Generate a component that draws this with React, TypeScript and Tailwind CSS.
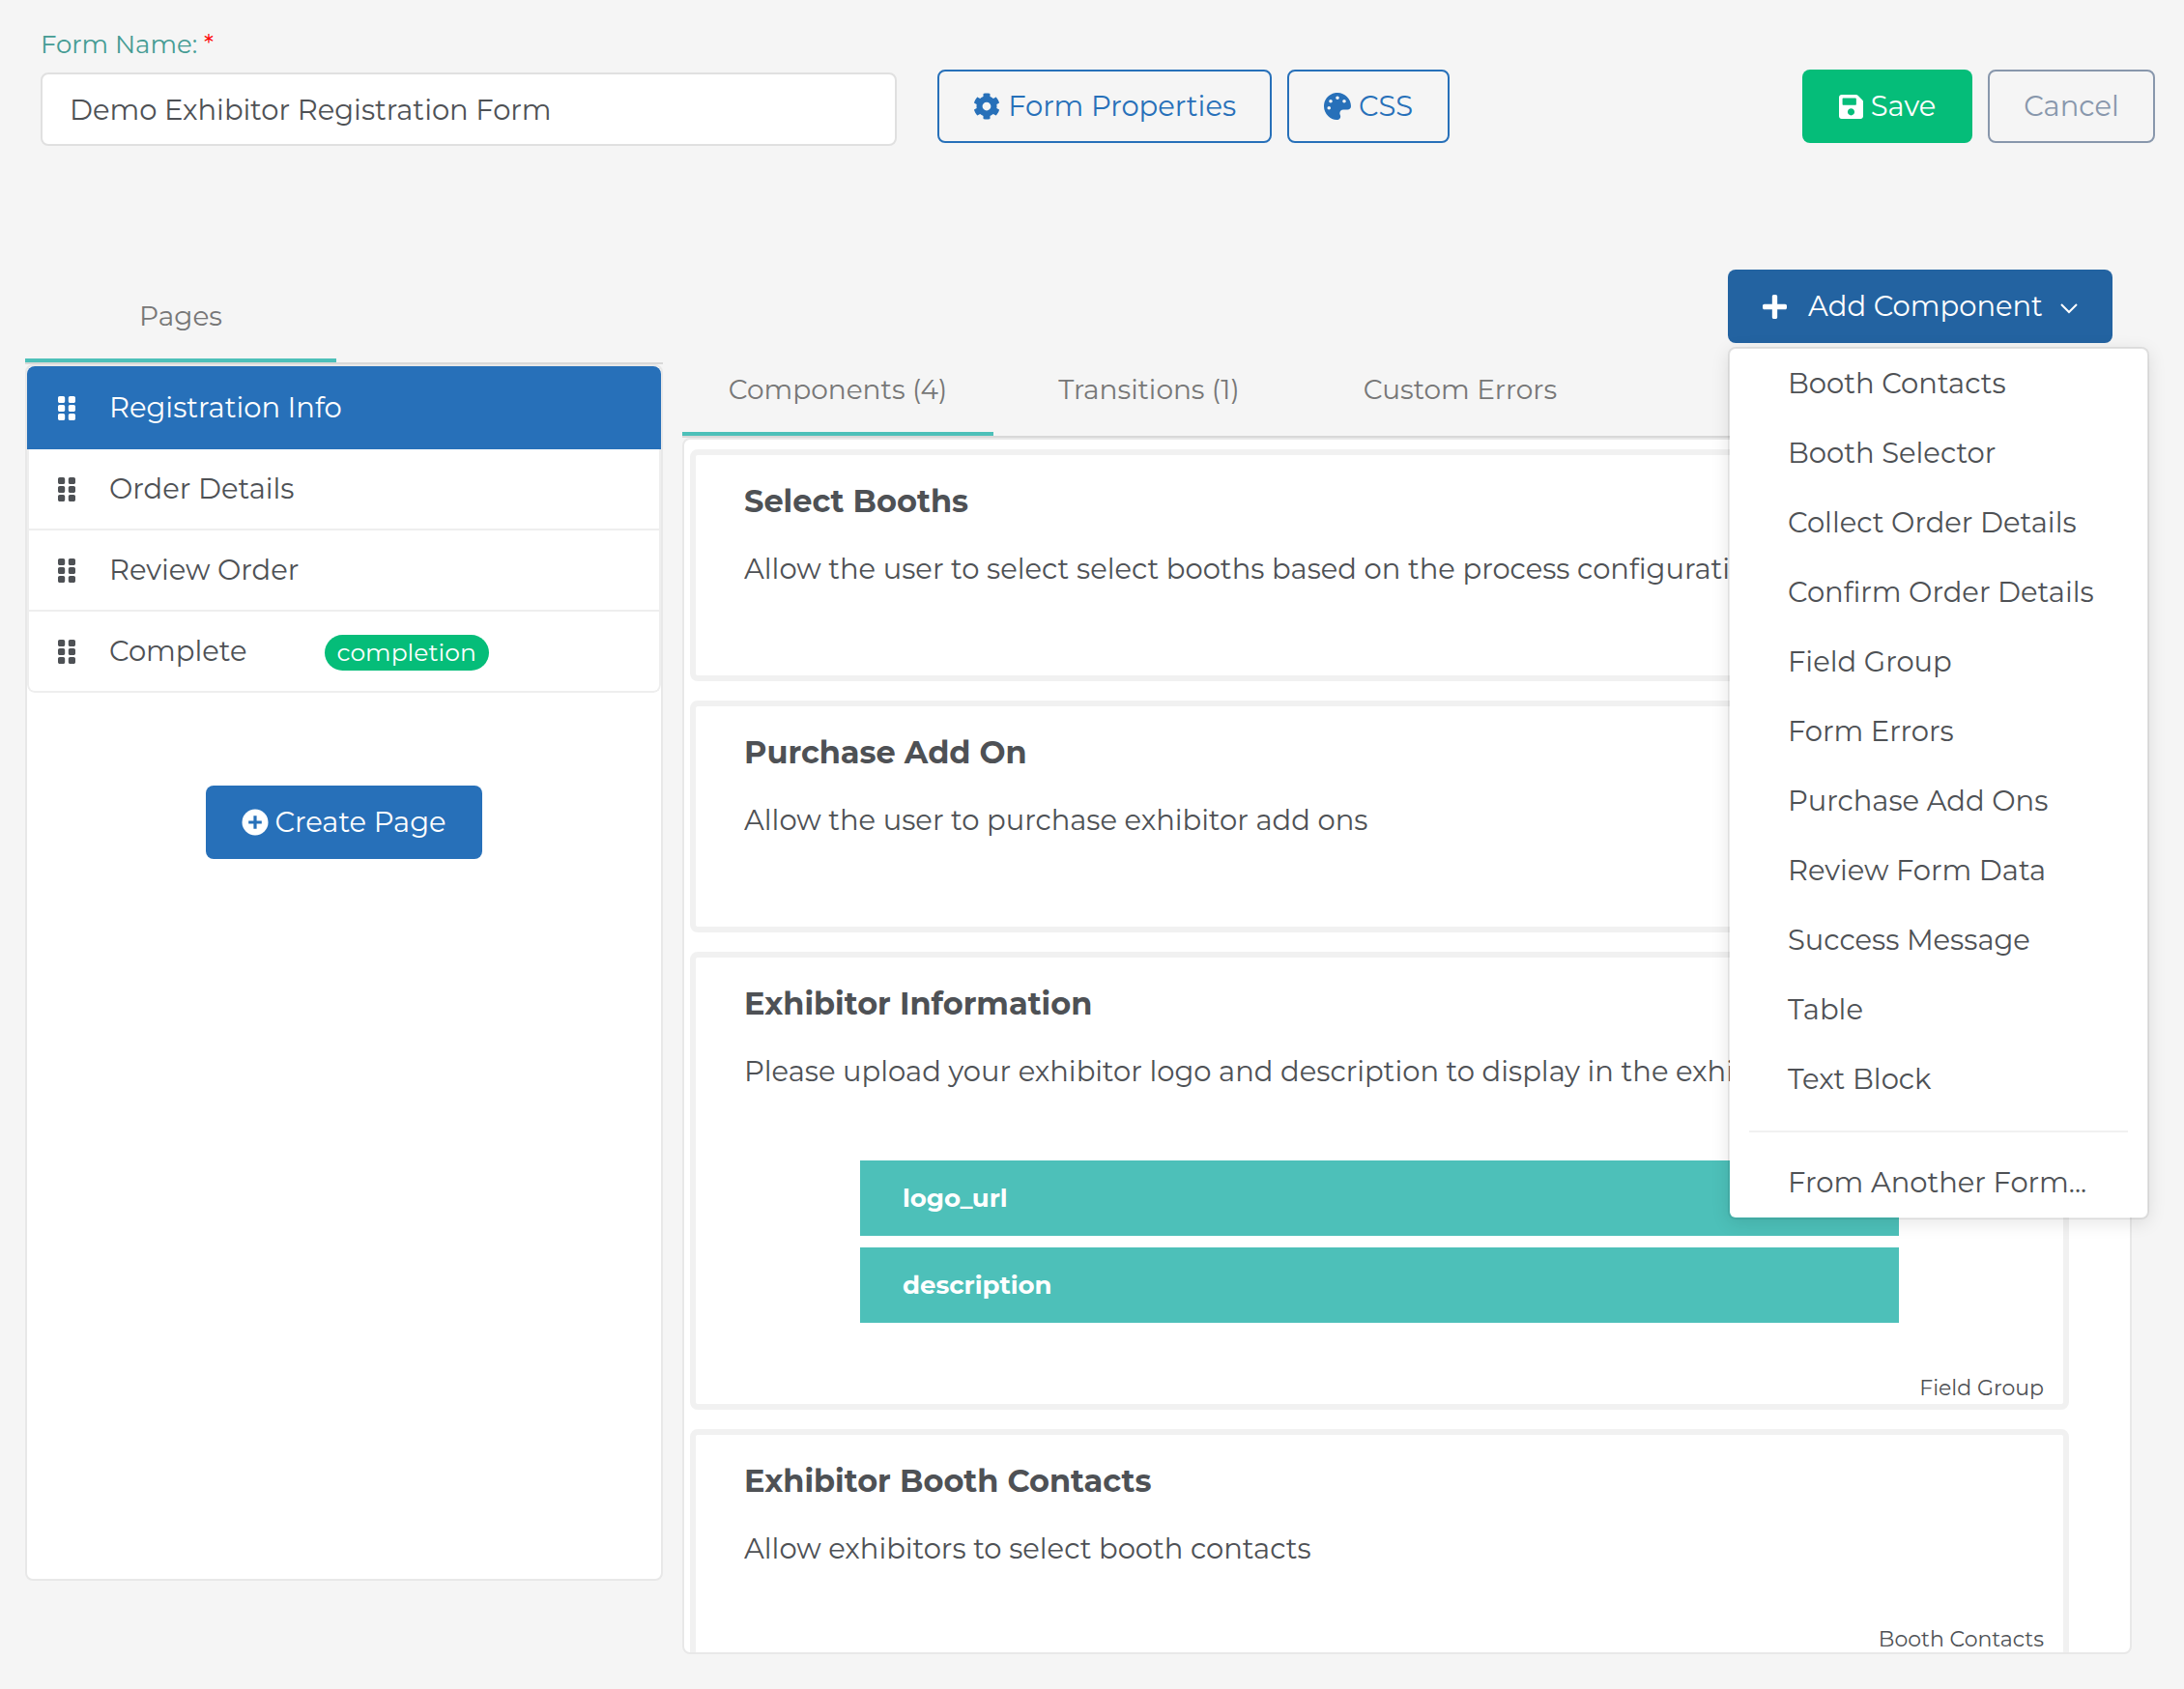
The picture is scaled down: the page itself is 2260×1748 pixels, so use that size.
import { useState } from "react";
import type { ReactNode } from "react";
import { FaCog, FaGripVertical, FaPalette, FaPlus, FaSave } from "react-icons/fa";

const pages = [
  { name: "Registration Info" },
  { name: "Order Details" },
  { name: "Review Order" },
  { name: "Complete", badge: "completion" },
];

const componentTypes = [
  "Booth Contacts",
  "Booth Selector",
  "Collect Order Details",
  "Confirm Order Details",
  "Field Group",
  "Form Errors",
  "Purchase Add Ons",
  "Review Form Data",
  "Success Message",
  "Table",
  "Text Block",
];

function Tab({ children, active = false }: { children: ReactNode; active?: boolean }) {
  return (
    <button
      type="button"
      role="tab"
      aria-selected={active}
      className={`h-24 w-[322px] shrink-0 border-b-4 pt-1 text-center text-[28px] leading-10 whitespace-nowrap text-[#777777] ${
        active ? "border-[#4dc0b9]" : "border-transparent"
      }`}
    >
      {children}
    </button>
  );
}

function ComponentCard({
  title,
  description,
  kind,
  fields = [],
}: {
  title: string;
  description: string;
  kind?: string;
  fields?: string[];
}) {
  return (
    <article className="flex min-h-[240px] shrink-0 flex-col rounded-lg border-6 border-[#f1f1f1] bg-white pr-5 pl-[50px]">
      <h2 className="pt-7 text-[32px] leading-10 font-bold">{title}</h2>
      <p className="mt-[30px] truncate text-[29px] leading-10">{description}</p>
      {fields.length > 0 && (
        <ul className="mt-[72px] mr-[150px] mb-[52px] ml-[120px] flex flex-col gap-3">
          {fields.map((field) => (
            <li key={field} className="bg-[#4dc0b9] px-11 py-[19px] text-[26px] leading-10 font-bold text-white">
              {field}
            </li>
          ))}
        </ul>
      )}
      {kind && <p className="mt-auto text-right text-[22px] leading-8">{kind}</p>}
    </article>
  );
}

export default function App() {
  const [name, setName] = useState("Demo Exhibitor Registration Form");

  return (
    <main className="min-h-screen bg-[#f5f5f5] pb-9 font-['Montserrat','Inter',sans-serif] text-[#4e5155]">
      <header className="flex items-start pt-[26px] pr-[30px] pl-[42px]">
        <div className="w-[40.5%]">
          <label htmlFor="form-name" className="block text-[26px] leading-10 text-[#459c94]">
            Form Name: <span className="text-[#ff0000]">*</span>
          </label>
          <input
            id="form-name"
            value={name}
            onChange={(event) => setName(event.target.value)}
            className="mt-[9px] h-[76px] w-full rounded-lg border-2 border-[#e0e0e0] bg-white px-7 text-[29px]"
          />
        </div>
        <div className="mt-[46px] ml-[42px] flex flex-1 gap-4">
          <button
            type="button"
            className="flex h-[76px] w-[346px] items-center justify-center gap-2 rounded-lg border-2 border-[#2770b9] text-[29px] text-[#2770b9]"
          >
            <FaCog aria-hidden className="size-7" /> Form Properties
          </button>
          <button
            type="button"
            className="flex h-[76px] w-[168px] items-center justify-center gap-2 rounded-lg border-2 border-[#2770b9] text-[29px] text-[#2770b9]"
          >
            <FaPalette aria-hidden className="size-7" /> CSS
          </button>
          <button
            type="button"
            className="ml-auto flex h-[76px] w-[176px] items-center justify-center gap-2 rounded-lg bg-[#05bd79] text-[29px] text-white"
          >
            <FaSave aria-hidden className="w-[25px]" /> Save
          </button>
          <button
            type="button"
            className="h-[76px] w-[173px] rounded-lg border-2 border-[#8897ac] text-[29px] text-[#8897ac]"
          >
            Cancel
          </button>
        </div>
      </header>

      <div className="mt-32 grid grid-cols-[660fr_1500fr] items-start gap-5 pr-[54px] pl-[26px]">
        <section aria-label="Pages" className="min-w-0">
          <div role="tablist" className="flex border-b-2 border-[#d8d8d8]">
            <Tab active>Pages</Tab>
          </div>
          <div className="h-[1259px] rounded-lg border-2 border-[#e8e8e8] bg-white">
            <ul className="overflow-hidden rounded-lg">
              {pages.map((page, index) => (
                <li
                  key={page.name}
                  className={
                    index === 0
                      ? "flex h-[86px] items-center bg-[#2770b9] px-8 text-white"
                      : "flex h-[84px] items-center border-x-2 border-b-2 border-[#eeeeee] px-[30px] last:rounded-b-lg"
                  }
                >
                  <button type="button" aria-label={`Move ${page.name}`} className="text-[29px]">
                    <FaGripVertical className="w-[18px]" />
                  </button>
                  <button type="button" className="ml-[35px] text-[29px] leading-10">
                    {page.name}
                  </button>
                  {page.badge && (
                    <span className="mt-[3px] ml-20 rounded-full bg-[#05bd79] px-[13px] text-[25px] leading-[37px] text-white">
                      {page.badge}
                    </span>
                  )}
                </li>
              ))}
            </ul>
            <button
              type="button"
              className="mx-auto mt-24 flex h-[76px] w-[286px] items-center justify-center gap-1.5 rounded-lg bg-[#2770b9] text-[29px] text-white"
            >
              <svg aria-hidden viewBox="0 0 28 28" className="size-7">
                <circle cx="14" cy="14" r="13.5" fill="currentColor" />
                <path d="M14 7.2v13.6M7.2 14h13.6" stroke="#2770b9" strokeWidth="3.2" />
              </svg>
              Create Page
            </button>
          </div>
        </section>

        <section aria-label="Page components" className="min-w-0">
          <div className="relative z-10 mr-5 ml-auto w-[398px]">
            <button
              type="button"
              aria-haspopup="menu"
              aria-expanded="true"
              className="flex h-[76px] w-full items-center justify-center rounded-lg bg-[#2363a1] text-[29px] text-white"
            >
              <FaPlus aria-hidden className="mr-[22px] h-[29px] w-[25px]" />
              Add Component
              <svg aria-hidden viewBox="0 0 18 12" className="mt-1 ml-[18px] h-3 w-[18px]" fill="none" stroke="currentColor" strokeWidth="2">
                <path d="M1 2l8 8 8-8" />
              </svg>
            </button>
            <div
              role="menu"
              className="absolute top-20 left-0 w-[436px] rounded-lg border-2 border-black/8 bg-white bg-clip-padding shadow-[0_4px_18px_rgba(0,0,0,0.1)]"
            >
              {componentTypes.map((type) => (
                <button
                  key={type}
                  type="button"
                  role="menuitem"
                  className="block h-[72px] w-full pl-[60px] text-left text-[29px] leading-10 whitespace-nowrap"
                >
                  {type}
                </button>
              ))}
              <hr className="mx-5 mt-[17px] mb-4 border-t-2 border-[#f1f1f1]" />
              <button
                type="button"
                role="menuitem"
                className="block h-[72px] w-full pl-[60px] text-left text-[29px] leading-10 whitespace-nowrap"
              >
                From Another Form...
              </button>
            </div>
          </div>
          <div role="tablist" className="flex border-b-2 border-[#d8d8d8]">
            <Tab active>Components (4)</Tab>
            <Tab>Transitions (1)</Tab>
            <Tab>Custom Errors</Tab>
          </div>
          <div className="flex h-[1259px] flex-col gap-5 overflow-hidden rounded-lg border-2 border-[#e8e8e8] bg-white pt-[10px] pr-[63px] pl-[6px]">
            <ComponentCard
              title="Select Booths"
              description="Allow the user to select select booths based on the process configuration"
            />
            <ComponentCard title="Purchase Add On" description="Allow the user to purchase exhibitor add ons" />
            <ComponentCard
              title="Exhibitor Information"
              description="Please upload your exhibitor logo and description to display in the exhibitor directory"
              kind="Field Group"
              fields={["logo_url", "description"]}
            />
            <ComponentCard
              title="Exhibitor Booth Contacts"
              description="Allow exhibitors to select booth contacts"
              kind="Booth Contacts"
            />
          </div>
        </section>
      </div>
    </main>
  );
}
